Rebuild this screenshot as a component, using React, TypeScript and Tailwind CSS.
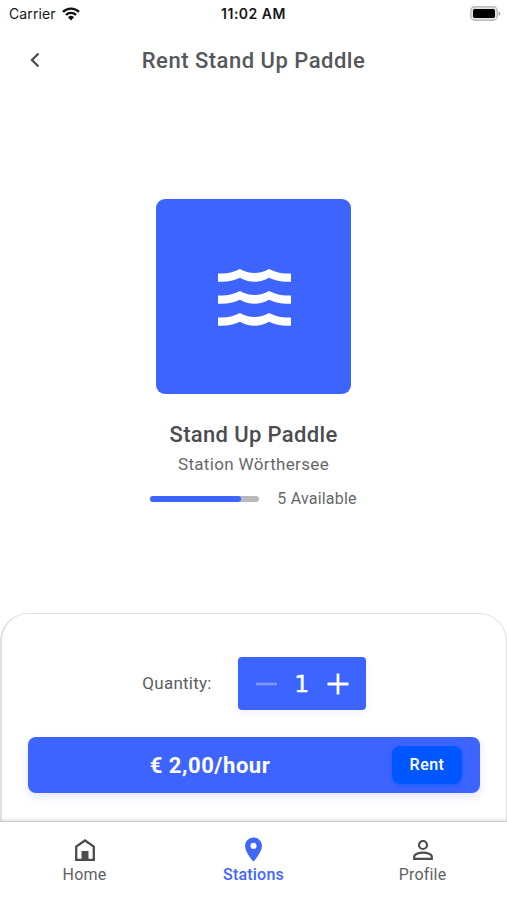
import { useState } from 'react';
import type { ReactNode } from 'react';
import { MdLocationOn } from 'react-icons/md';

const MAX_AVAILABLE = 6;

export default function App() {
  const [quantity, setQuantity] = useState(1);
  const available = 5;

  return (
    <div className="flex h-[900px] w-[507px] flex-col overflow-hidden bg-white font-['Roboto','Noto_Sans',sans-serif] text-[#55575b]">
      <StatusBar />

      {/* Header */}
      <header className="grid h-[66px] grid-cols-[70px_1fr_70px] items-center">
        <button aria-label="Back" className="flex justify-center">
          <svg width="10" height="16" viewBox="0 0 10 16" fill="none" stroke="#4c4e52" strokeWidth="2.3">
            <path d="M8.5 1.5 2 8l6.5 6.5" />
          </svg>
        </button>
        <h1 className="pt-[2px] text-center text-[22px] font-medium leading-7 tracking-[0.5px] whitespace-nowrap">
          Rent Stand Up Paddle
        </h1>
      </header>

      {/* Product */}
      <main className="flex flex-1 flex-col items-center pt-[106px]">
        <div className="flex h-[195px] w-[195px] items-center justify-center rounded-[9px] bg-[#3e64ff]">
          <WavesIcon />
        </div>
        <h2 className="mt-[26px] text-[22px] font-medium leading-[30px] tracking-[0.35px] text-[#4b4c4f]">
          Stand Up Paddle
        </h2>
        <p className="mt-[2px] text-[17px] leading-6 tracking-[0.33px] text-[#66686b]">Station Wörthersee</p>
        <div className="mt-[12px] flex items-center gap-[18px]">
          <div className="h-[6px] w-[109px] overflow-hidden rounded-full bg-[#b9b9bb]">
            <div
              className="h-full rounded-r-full bg-[#3e64ff]"
              style={{ width: `${(available / MAX_AVAILABLE) * 100}%` }}
            />
          </div>
          <span className="text-[16px] leading-[22px] tracking-[0.2px] text-[#66686b]">{available} Available</span>
        </div>
      </main>

      {/* Rent sheet */}
      <section className="flex h-[208px] flex-col rounded-t-[28px] border border-b-0 border-l-2 border-[#e1e1e3] px-[26px] pt-[43px]">
        <div className="flex items-center justify-center gap-[26px]">
          <span className="pt-px text-[17px] tracking-[0.25px] text-[#5c5e61]">Quantity:</span>
          <div className="flex h-[53px] w-[128px] items-center justify-between rounded-[4px] bg-[#3e64ff] pr-[17px] pl-[18px] text-white shadow-[0_3px_6px_rgba(62,100,255,0.08)]">
            <button aria-label="Decrease" disabled={quantity <= 1} onClick={() => setQuantity(quantity - 1)}>
              <svg width="21" height="22" viewBox="0 0 21 22" stroke="#7e98ff" strokeWidth="2.6">
                <path d="M0 11h21" />
              </svg>
            </button>
            <span className="font-['DejaVu_Sans',sans-serif] text-[23.5px] leading-7 [-webkit-text-stroke:0.4px_white]">
              {quantity}
            </span>
            <button aria-label="Increase" disabled={quantity >= available} onClick={() => setQuantity(quantity + 1)}>
              <svg width="22" height="22" viewBox="0 0 22 22" stroke="white" strokeWidth="2.8">
                <path d="M0.5 11h21M11 .5v21" />
              </svg>
            </button>
          </div>
        </div>
        <div className="mt-[27px] flex h-[56px] items-center rounded-[8px] bg-[#3e64ff] pr-[18px] text-white shadow-[0_4px_8px_rgba(62,100,255,0.16)]">
          <span className="flex-1 pt-px text-center text-[22px] font-bold tracking-[0.55px]">€ 2,00/hour</span>
          <button className="h-[38px] w-[70px] rounded-[8px] bg-[#0057ff] text-[16px] font-medium tracking-[0.5px] shadow-[0_2px_4px_rgba(0,87,255,0.5)]">
            Rent
          </button>
        </div>
      </section>

      {/* Tabs */}
      <nav className="z-10 grid h-[79px] grid-cols-3 border-t border-[#cbcbcd] bg-white pt-[14px] shadow-[0_-1px_4px_rgba(0,0,0,0.14)]">
        <Tab label="Home" icon={<HomeIcon />} />
        <Tab label="Stations" icon={<MdLocationOn size={29} />} active />
        <Tab label="Profile" icon={<ProfileIcon />} />
      </nav>
    </div>
  );
}

function StatusBar() {
  return (
    <div className="grid h-[27px] grid-cols-3 items-center font-['Inter',sans-serif] text-[14px] text-[#161616]">
      <div className="flex items-center gap-[6px] pl-[9px]">
        <span className="tracking-[0.1px]">Carrier</span>
        <svg width="18" height="14" viewBox="0 0 18 14" fill="none" stroke="#111" strokeWidth="2.4">
          <path d="M1 4.9a11.5 11.5 0 0 1 16 0M3.9 8a7.3 7.3 0 0 1 10.2 0" />
          <path d="M6 10.2a4.4 4.4 0 0 1 6 0L9 13.5z" fill="#111" stroke="none" />
        </svg>
      </div>
      <span className="text-center text-[14px] font-semibold tracking-[0.5px]">11:02 AM</span>
      <div className="flex justify-end pr-[6px]">
        <svg width="31" height="15" viewBox="0 0 31 15">
          <rect x=".75" y=".75" width="26.5" height="13.5" rx="4" fill="#e2e2e2" stroke="#bcbcbc" strokeWidth="1.3" />
          <rect x="3" y="3" width="22" height="9" rx="1.8" fill="#000" />
          <path d="M28.5 5.2c2.4.8 2.400 3.8 0 4.6z" fill="#a5a5a5" />
        </svg>
      </div>
    </div>
  );
}

function Tab({ label, icon, active = false }: { label: string; icon: ReactNode; active?: boolean }) {
  return (
    <button className={`flex flex-col items-center ${active ? 'font-medium text-[#4266fa]' : 'text-[#5f6164]'}`}>
      <span className="flex h-[27px] items-center">{icon}</span>
      <span className="pt-px text-[16px] leading-[22px] tracking-[0.2px]">{label}</span>
    </button>
  );
}

function WavesIcon() {
  return (
    <svg width="74" height="57" viewBox="-1 0 74 57" fill="white" className="mt-[2px]">
      {[0, 22, 44].map((y) => (
        <path
          key={y}
          transform={`translate(0 ${y})`}
          d="M0 4.4C8 5 14 4 22 0C31 5.2 42 5.2 51 0C59 4 65 5 73 4.4V12.7C65 13.3 58 12.3 51 8.8C42 14 31 14 22 8.8C15 12.3 8 13.3 0 12.7Z"
        />
      ))}
    </svg>
  );
}

function HomeIcon() {
  return (
    <svg width="20" height="22" viewBox="0 0 20 22">
      <path d="M1.2 20.8V7.5L10 1.5l8.8 6v13.3z" fill="none" stroke="#4b4d50" strokeWidth="2.3" />
      <path d="M6.5 12h7v9h-7z" fill="#4b4d50" />
    </svg>
  );
}

function ProfileIcon() {
  return (
    <svg width="20" height="20" viewBox="0 0 20 20" fill="none" stroke="#4b4d50" strokeWidth="2.2">
      <circle cx="10" cy="5" r="4" />
      <path d="M1.200 18.800v-2.200c0-2.400 4.400-3.900 8.800-3.900s8.800 1.500 8.800 3.900v2.200z" />
    </svg>
  );
}
